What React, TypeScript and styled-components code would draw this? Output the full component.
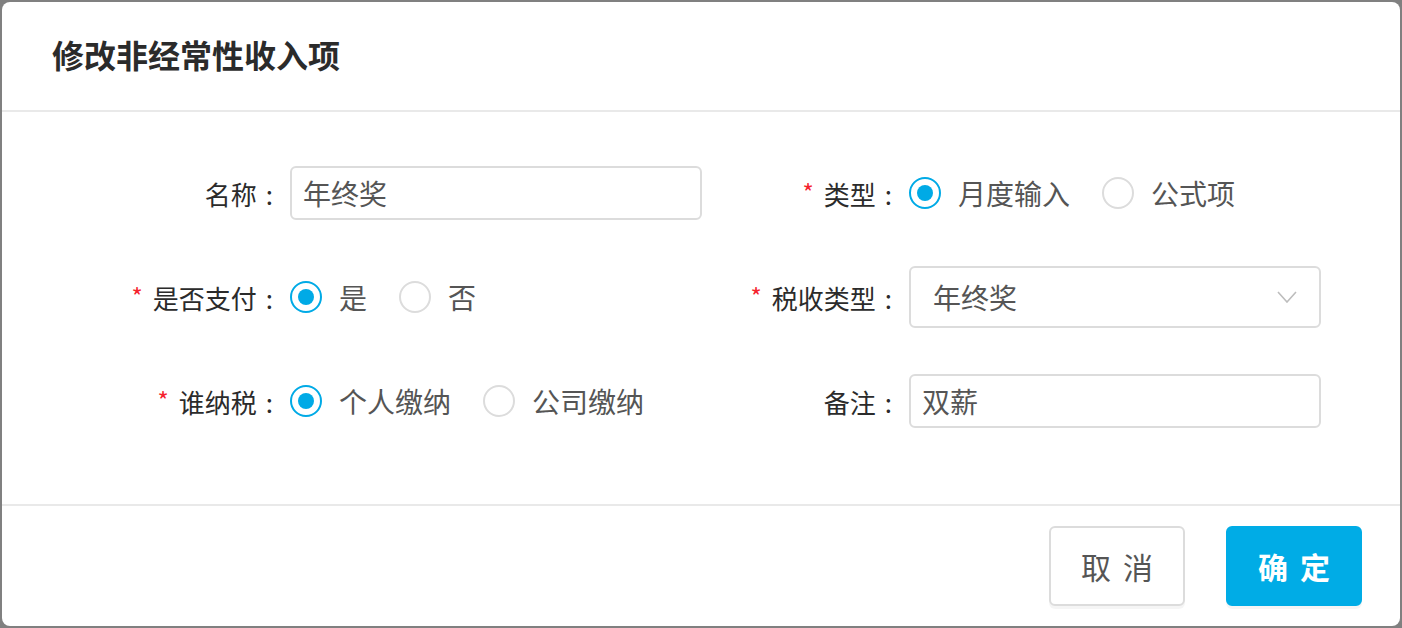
import React from "react";
import styled, { createGlobalStyle } from "styled-components";

const GlobalStyle = createGlobalStyle`
  html, body {
    margin: 0;
    padding: 0;
    background: #808080;
    font-family: "Noto Sans CJK SC", "Noto Sans", sans-serif;
  }
  * { box-sizing: border-box; }
`;

const Page = styled.div`
  width: 1402px;
  height: 628px;
  padding: 2px;
`;

const Dialog = styled.div`
  width: 100%;
  height: 100%;
  background: #fff;
  border-radius: 8px;
  display: flex;
  flex-direction: column;
  overflow: hidden;
`;

const Header = styled.div`
  height: 110px;
  flex: none;
  border-bottom: 2px solid #e9e9e9;
  display: flex;
  align-items: center;
  padding: 0 0 4px 50px;
`;

const Title = styled.div`
  font-size: 32px;
  font-weight: 700;
  color: #2b2b2b;
`;

const Body = styled.div`
  flex: 1;
  padding: 50px 0 0 118px;
`;

const FormGrid = styled.div`
  display: grid;
  grid-template-columns: 582px 582px;
  grid-auto-rows: 62px;
  column-gap: 37px;
  row-gap: 42px;
`;

const Field = styled.div`
  display: flex;
  align-items: center;
`;

const Label = styled.div`
  width: 170px;
  flex: none;
  text-align: right;
  padding-right: 17px;
  font-size: 26px;
  color: #2b2b2b;
  white-space: nowrap;
`;

const Star = styled.span`
  color: #f5222d;
  font-size: 24px;
  margin-right: 10px;
  vertical-align: 3px;
`;

const Colon = styled.span`
  margin-left: 9px;
`;

const TextBox = styled.div`
  width: 412px;
  height: 54px;
  border: 2px solid #dcdcdc;
  border-radius: 6px;
  display: flex;
  align-items: center;
  padding: 0 11px;
  font-size: 28px;
  color: #555;
`;

const SelectBox = styled(TextBox)`
  height: 62px;
  padding: 0 22px;
  justify-content: space-between;
`;

const RadioGroup = styled.div`
  display: flex;
  align-items: center;
  gap: 32px;
`;

const RadioItem = styled.label`
  display: flex;
  align-items: center;
  gap: 17px;
  font-size: 28px;
  color: #555;
`;

const RadioCircle = styled.span<{ $checked?: boolean }>`
  width: 32px;
  height: 32px;
  border-radius: 50%;
  border: 2px solid ${(p) => (p.$checked ? "#00aae6" : "#dcdcdc")};
  display: flex;
  align-items: center;
  justify-content: center;
  &::after {
    content: "";
    width: 16px;
    height: 16px;
    border-radius: 50%;
    background: ${(p) => (p.$checked ? "#00aae6" : "transparent")};
  }
`;

const Footer = styled.div`
  height: 122px;
  flex: none;
  border-top: 2px solid #e9e9e9;
  display: flex;
  justify-content: flex-end;
  align-items: flex-start;
  gap: 41px;
  padding: 20px 38px 0 0;
`;

const Button = styled.button<{ $primary?: boolean }>`
  width: 136px;
  height: 80px;
  border-radius: 6px;
  border: 2px solid ${(p) => (p.$primary ? "#00ace6" : "#dcdcdc")};
  background: ${(p) => (p.$primary ? "#00ace6" : "#fff")};
  color: ${(p) => (p.$primary ? "#fff" : "#555")};
  font-family: inherit;
  font-size: 30px;
  font-weight: ${(p) => (p.$primary ? 700 : 400)};
  letter-spacing: 12px;
  padding: 0 0 0 12px;
  box-shadow: 0 3px 0 rgba(0, 0, 0, 0.04);
  cursor: pointer;
`;

const Chevron = () => (
  <svg width="20" height="12" viewBox="0 0 20 12" fill="none">
    <path d="M1 1 L10 11 L19 1" stroke="#bdbdbd" strokeWidth="1.6" />
  </svg>
);

type Opt = { text: string; checked?: boolean };

const Radios = ({ options }: { options: Opt[] }) => (
  <RadioGroup>
    {options.map((o) => (
      <RadioItem key={o.text}>
        <RadioCircle $checked={o.checked} />
        {o.text}
      </RadioItem>
    ))}
  </RadioGroup>
);

const FieldLabel = ({ text, required }: { text: string; required?: boolean }) => (
  <Label>
    {required && <Star>*</Star>}
    {text}
    <Colon>:</Colon>
  </Label>
);

export default function App() {
  return (
    <>
      <GlobalStyle />
      <Page>
        <Dialog>
          <Header>
            <Title>修改非经常性收入项</Title>
          </Header>
          <Body>
            <FormGrid>
              <Field>
                <FieldLabel text="名称" />
                <TextBox>年终奖</TextBox>
              </Field>
              <Field>
                <FieldLabel text="类型" required />
                <Radios options={[{ text: "月度输入", checked: true }, { text: "公式项" }]} />
              </Field>
              <Field>
                <FieldLabel text="是否支付" required />
                <Radios options={[{ text: "是", checked: true }, { text: "否" }]} />
              </Field>
              <Field>
                <FieldLabel text="税收类型" required />
                <SelectBox>
                  <span>年终奖</span>
                  <Chevron />
                </SelectBox>
              </Field>
              <Field>
                <FieldLabel text="谁纳税" required />
                <Radios options={[{ text: "个人缴纳", checked: true }, { text: "公司缴纳" }]} />
              </Field>
              <Field>
                <FieldLabel text="备注" />
                <TextBox>双薪</TextBox>
              </Field>
            </FormGrid>
          </Body>
          <Footer>
            <Button>取消</Button>
            <Button $primary>确定</Button>
          </Footer>
        </Dialog>
      </Page>
    </>
  );
}
